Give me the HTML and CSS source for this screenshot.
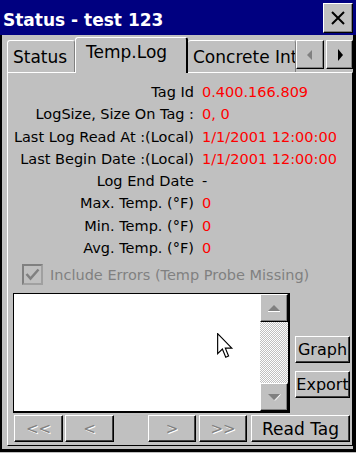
FILE: index.html
```html
<!DOCTYPE html>
<html lang="en">
<head>
  <meta charset="UTF-8">
  <title>Status - test 123</title>
  <link rel="stylesheet" href="styles.css">
</head>
<body>
  <div class="window">
    <div class="titlebar">
      <span class="title">Status - test 123</span>
      <button class="close">
        <svg width="14" height="14" viewBox="0 0 14 14"><path d="M1 1L13 13M13 1L1 13" stroke="#000" stroke-width="2"/></svg>
      </button>
    </div>

    <div class="frame">
      <div class="tabs">
        <div class="tab tab-status">Status</div>
        <div class="tab tab-active">Temp.Log</div>
        <div class="tab tab-concrete">Concrete Int</div>
        <div class="tab-arrows">
          <button class="arrow-btn">
            <svg width="8" height="12" viewBox="0 0 8 12"><path d="M6 1L1 6L6 11Z" fill="#808080"/></svg>
          </button>
          <button class="arrow-btn">
            <svg width="8" height="12" viewBox="0 0 8 12"><path d="M2 0L7 6L2 12Z" fill="#000"/></svg>
          </button>
        </div>
      </div>

      <div class="panel">
        <div class="info">
          <div class="lbl">Tag Id</div><div class="val">0.400.166.809</div>
          <div class="lbl">LogSize, Size On Tag :</div><div class="val">0, 0</div>
          <div class="lbl">Last Log Read At :(Local)</div><div class="val">1/1/2001 12:00:00</div>
          <div class="lbl">Last Begin Date :(Local)</div><div class="val">1/1/2001 12:00:00</div>
          <div class="lbl">Log End Date</div><div class="val plain">-</div>
          <div class="lbl">Max. Temp. (°F)</div><div class="val">0</div>
          <div class="lbl">Min. Temp. (°F)</div><div class="val">0</div>
          <div class="lbl">Avg. Temp. (°F)</div><div class="val">0</div>
        </div>

        <label class="check-row">
          <span class="checkbox">
            <svg width="15" height="13" viewBox="0 0 15 13"><path d="M1.5 6L5.5 10.5L13.5 1.5" fill="none" stroke="#808080" stroke-width="2.5"/></svg>
          </span>
          <span class="check-text">Include Errors (Temp Probe Missing)</span>
        </label>

        <div class="list-area">
          <div class="listbox">
            <div class="list-body"></div>
            <div class="scrollbar">
              <div class="sb-btn">
                <svg width="14" height="8" viewBox="0 0 14 8"><path d="M1 7L7 1L13 7Z" fill="#808080"/><path d="M1 7.5H13" stroke="#fff"/></svg>
              </div>
              <div class="sb-track"></div>
              <div class="sb-btn">
                <svg width="14" height="8" viewBox="0 0 14 8"><path d="M1 1L7 7L13 1Z" fill="#808080"/><path d="M8 7.5L13.5 1.5" stroke="#fff"/></svg>
              </div>
            </div>
          </div>
          <div class="side-btns">
            <button class="btn btn-side">Graph</button>
            <button class="btn btn-side">Export</button>
          </div>
        </div>

        <div class="nav-row">
          <button class="btn btn-nav off">&lt;&lt;</button>
          <button class="btn btn-nav off">&lt;</button>
          <button class="btn btn-nav off gap-left">&gt;</button>
          <button class="btn btn-nav off">&gt;&gt;</button>
          <button class="btn btn-read">Read Tag</button>
        </div>
      </div>
    </div>

    <svg class="cursor" width="18" height="27" viewBox="0 0 14 21">
      <path d="M0.5 0.5V16L4.2 12.5L6.8 18.8L9 17.9L6.5 11.8H11.5Z" fill="#fff" stroke="#000" stroke-width="0.9" stroke-linejoin="miter"/>
    </svg>
  </div>
</body>
</html>
```

FILE: styles.css
```css
* {
  box-sizing: border-box;
}

body {
  margin: 0;
  font-family: "DejaVu Sans", sans-serif;
  font-size: 14.5px;
  background: #c0c0c0;
}

button {
  font-family: inherit;
  margin: 0;
  padding: 0;
}

.window {
  position: relative;
  width: 356px;
  height: 453px;
  display: flex;
  flex-direction: column;
  background: #c0c0c0;
  overflow: hidden;
}

.titlebar {
  height: 35px;
  flex-shrink: 0;
  background: #000080;
  display: flex;
  align-items: center;
  justify-content: space-between;
  padding: 0 3px;
}

.title {
  color: #fff;
  font-weight: bold;
  font-size: 17px;
  margin-top: 4px;
}

.close {
  width: 30px;
  height: 30px;
  background: #c0c0c0;
  border: 1px solid;
  border-color: #fff #000 #000 #fff;
  box-shadow: inset -1px -1px #808080;
  display: flex;
  align-items: center;
  justify-content: center;
}

.frame {
  flex: 1;
  border-left: 2px solid #000;
  border-right: 3px solid #000;
  border-bottom: 3px solid #000;
  margin-bottom: 1px;
  padding-left: 5px;
}

/* tab strip */
.tabs {
  height: 37px;
  display: flex;
  align-items: flex-end;
}

.tab {
  font-size: 17px;
  height: 32px;
  line-height: 30px;
  white-space: nowrap;
  overflow: hidden;
  background: #c0c0c0;
  border: 1px solid #fff;
  border-right-color: #808080;
  border-bottom: none;
  border-radius: 3px 3px 0 0;
}

.tab-status {
  width: 68px;
  padding-left: 5px;
  padding-top: 1px;
}

.tab-active {
  position: relative;
  z-index: 2;
  width: 113px;
  height: 36px;
  margin-bottom: -1px;
  padding-left: 10px;
  line-height: 29px;
  border-right: 2px solid #000;
}

.tab-concrete {
  width: 108px;
  padding-left: 5px;
  padding-top: 1px;
  border-left: none;
}

.tab-arrows {
  display: flex;
  gap: 2px;
  margin-bottom: 3px;
}

.arrow-btn {
  width: 28px;
  height: 29px;
  background: #c0c0c0;
  border: 1px solid;
  border-color: #fff #000 #000 #fff;
  box-shadow: inset -1px -1px #808080;
  display: flex;
  align-items: center;
  justify-content: center;
}

.arrow-btn + .arrow-btn {
  width: 27px;
}

/* panel */
.panel {
  width: 346px;
  height: 374px;
  border: 1px solid;
  border-color: #fff #000 #000 #fff;
  padding-top: 8px;
}

.info {
  display: grid;
  grid-template-columns: 186px auto;
  column-gap: 8px;
  line-height: 22.3px;
}

.lbl {
  text-align: right;
  white-space: nowrap;
}

.val {
  color: #ff0000;
  white-space: nowrap;
}

.val.plain {
  color: #000;
}

.check-row {
  display: flex;
  align-items: center;
  gap: 7px;
  height: 21px;
  margin-top: 5px;
  padding-left: 14px;
  color: #808080;
}

.checkbox {
  width: 21px;
  height: 21px;
  border: 2px solid #808080;
  border-right-color: #a0a0a0;
  border-bottom-color: #a0a0a0;
  display: flex;
  align-items: center;
  justify-content: center;
}

/* list + side buttons */
.list-area {
  display: flex;
  height: 120px;
  margin-top: 8px;
  padding-left: 5px;
}

.listbox {
  width: 277px;
  display: flex;
  border: solid #000;
  border-width: 1px 2px 2px 1px;
  background: #fff;
}

.list-body {
  flex: 1;
}

.scrollbar {
  width: 28px;
  display: flex;
  flex-direction: column;
}

.sb-btn {
  height: 28px;
  background: #c0c0c0;
  border: 1px solid;
  border-color: #fff #000 #000 #fff;
  box-shadow: inset -1px -1px #808080;
  display: flex;
  align-items: center;
  justify-content: center;
}

.sb-track {
  flex: 1;
  background: repeating-conic-gradient(#c0c0c0 0 25%, #fff 0 50%) 0 0 / 2px 2px;
}

.side-btns {
  display: flex;
  flex-direction: column;
  justify-content: flex-end;
  gap: 8px;
  margin-left: 5px;
  padding-bottom: 15px;
}

.btn {
  background: #c0c0c0;
  border: 1px solid;
  border-color: #fff #000 #000 #fff;
  box-shadow: inset -1px -1px #404040;
  color: #000;
  white-space: nowrap;
}

.btn-side {
  width: 55px;
  height: 27px;
  font-size: 16px;
}

.nav-row {
  display: flex;
  gap: 2px;
  height: 27px;
  margin-top: 2px;
  padding-left: 6px;
}

.btn-nav {
  width: 49px;
  font-size: 15px;
}

.btn-nav.off {
  color: #808080;
  text-shadow: 1px 1px #fff;
}

.gap-left {
  margin-left: 32px;
  width: 48px;
}

.gap-left + .btn-nav {
  width: 48px;
  margin-left: 1px;
}

.btn-read {
  width: 99px;
  margin-left: 2px;
  font-size: 17px;
}

.cursor {
  position: absolute;
  left: 217px;
  top: 333px;
}
```
